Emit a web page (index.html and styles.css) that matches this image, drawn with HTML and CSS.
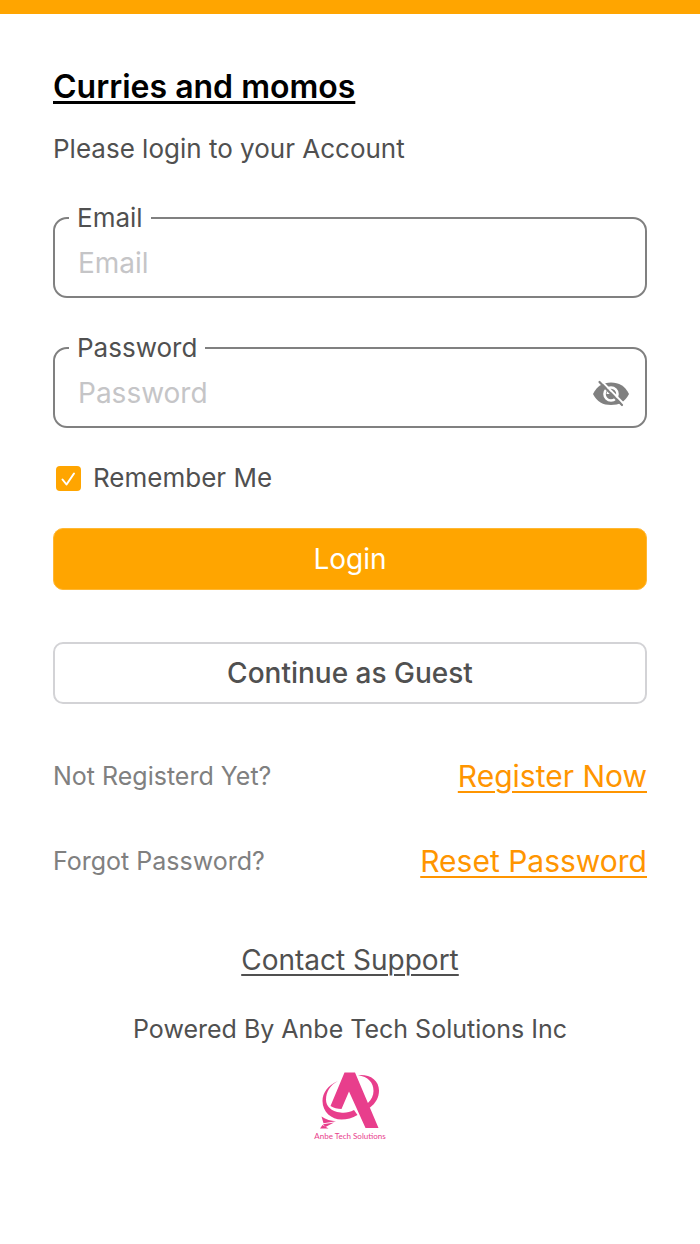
FILE: index.html
```html
<!DOCTYPE html>
<html lang="en">
<head>
<meta charset="utf-8">
<meta name="viewport" content="width=device-width, initial-scale=1">
<title>Curries and momos</title>
<link rel="stylesheet" href="styles.css">
</head>
<body>
<main class="page">
  <h1 class="title">Curries and momos</h1>
  <p class="subtitle">Please login to your Account</p>
  <form class="form">
    <fieldset class="field">
      <legend class="field-legend"><label for="email">Email</label></legend>
      <input class="field-input" id="email" type="email" placeholder="Email">
    </fieldset>
    <fieldset class="field">
      <legend class="field-legend"><label for="password">Password</label></legend>
      <div class="field-row">
        <input class="field-input" id="password" type="password" placeholder="Password">
        <button class="reveal" type="button" aria-label="Show password">
          <svg viewBox="0 0 36 28" width="36" height="28" aria-hidden="true">
            <path d="M0 14C4 6 10 2.500 18 2.500s14 3.500 18 11.500c-4 8-10 11-18 11S4 22 0 14z" fill="#808080"/>
            <circle cx="18" cy="14" r="6.500" fill="none" stroke="#fff" stroke-width="2.600"/>
            <path d="M13.500 14a4.500 4.500 0 0 1 4.500-4.500V14z" fill="#fff"/>
            <path d="M8.500 1l22 22.500" stroke="#fff" stroke-width="2"/>
            <path d="M6.500 2l22.500 23" stroke="#808080" stroke-width="2.200" stroke-linecap="round"/>
          </svg>
        </button>
      </div>
    </fieldset>
    <label class="remember">
      <input class="checkbox" type="checkbox" checked>
      <span>Remember Me</span>
    </label>
    <button class="button button-primary" type="submit">Login</button>
    <button class="button button-outline" type="button">Continue as Guest</button>
  </form>
  <div class="prompt">
    <span>Not Registerd Yet?</span>
    <a class="prompt-link" href="#register">Register Now</a>
  </div>
  <div class="prompt">
    <span>Forgot Password?</span>
    <a class="prompt-link" href="#reset">Reset Password</a>
  </div>
  <footer class="footer">
    <a class="support" href="#support">Contact Support</a>
    <p class="powered">Powered By Anbe Tech Solutions Inc</p>
    <svg class="logo" viewBox="0 0 100 90" width="100" height="90" role="img" aria-label="Anbe Tech Solutions">
      <g fill="#e83e8c">
        <path d="M44.500 12.500H55L78.500 68H65.500L49 31.500 41.500 49C37.500 49 33.500 48 30.500 46z"/>
        <path d="M38 21C28 25 22.500 33 22.500 41c0 11 9 18.500 19 18.500 5.500 0 11-1.500 16-4.500L54 50c-4.500 2.500-9 3-13.500 2.500C31 51.500 26 46 26 39.500 26 32 30 25 38 21z"/>
        <path d="M58 15C70 14 79 20 79 30.500c0 7-3 12.500-9.500 17.500L67.500 43.500c4-4 6-8 6-12.500C73.500 22 68 17 58 15z"/>
        <path d="M21.500 56.500C26 59.500 31 61 36 61.200L23.500 63.200z"/>
        <path d="M23 64.200L34 62.500 25.500 67z"/>
        <path d="M22.500 65L28.500 68.500H20z"/>
      </g>
      <text class="logo-text" x="50" y="79" text-anchor="middle">Anbe Tech Solutions</text>
    </svg>
  </footer>
</main>
</body>
</html>
```
FILE: styles.css
```css
* {
  box-sizing: border-box;
}

body {
  margin: 0;
  background: #fff;
  color: #505050;
  font-family: Inter, "Liberation Sans", sans-serif;
  font-size: 26px;
  line-height: 32px;
}

.page {
  border-top: 14px solid #ffa500;
  padding: 53px 53px 0;
}

.title {
  margin: 0 0 26px;
  color: #000;
  font-size: 32px;
  font-weight: 600;
  line-height: 40px;
  text-decoration: underline;
  text-decoration-thickness: 3px;
  text-underline-offset: 3px;
}

.subtitle {
  margin: 0 0 37px;
}

.form {
  display: flex;
  flex-direction: column;
}

.field {
  min-width: 0;
  margin: 0 0 34px;
  padding: 0 14px;
  border: 2px solid #808080;
  border-radius: 14px;
}

.field-legend {
  padding: 0 8px;
}

.field-row {
  display: flex;
  align-items: center;
}

.field-input {
  flex: 1;
  display: block;
  width: 100%;
  min-width: 0;
  height: 62px;
  padding: 0 9px 4px;
  border: 0;
  outline: 0;
  background: transparent;
  color: #505050;
  font: inherit;
  font-size: 28px;
}

.field-input::placeholder {
  color: #c5c5c7;
  opacity: 1;
}

.reveal {
  display: flex;
  padding: 0 0 2px;
  margin-right: 2px;
  border: 0;
  background: none;
}

.remember {
  display: flex;
  align-items: center;
  gap: 12px;
  margin-bottom: 34px;
  padding-left: 3px;
}

.checkbox {
  appearance: none;
  width: 25px;
  height: 25px;
  margin: 0;
  border-radius: 4px;
  background: #ffa500 url("data:image/svg+xml,%3Csvg xmlns='http://www.w3.org/2000/svg' viewBox='0 0 25 25'%3E%3Cpath d='M6.500 13.500l4 5L18 7.500' fill='none' stroke='white' stroke-width='2' stroke-linecap='round' stroke-linejoin='round'/%3E%3C/svg%3E");
}

.button {
  height: 62px;
  padding: 0;
  border-radius: 10px;
  font: inherit;
  font-size: 28px;
}

.button-primary {
  margin-bottom: 52px;
  border: 1px solid #ffb733;
  background: #ffa500;
  color: #fff;
}

.button-outline {
  margin-bottom: 52px;
  border: 2px solid #d3d3d6;
  background: #fff;
  color: #505050;
  font-weight: 500;
}

.prompt {
  display: flex;
  align-items: center;
  justify-content: space-between;
  margin-bottom: 45px;
  color: #808080;
  font-size: 25px;
  line-height: 40px;
}

.prompt-link {
  color: #ff9500;
  font-size: 30px;
  text-decoration-thickness: 2px;
  text-underline-offset: 4px;
}

.footer {
  display: flex;
  flex-direction: column;
  align-items: center;
  padding-top: 18px;
}

.support {
  color: #505050;
  font-size: 28px;
  text-decoration-thickness: 2px;
  text-underline-offset: 4px;
}

.powered {
  margin: 37px 0 15px;
  font-size: 25px;
}

.logo {
  display: block;
}

.logo-text {
  fill: #e83e8c;
  font-family: Lato, sans-serif;
  font-size: 8px;
}
```
